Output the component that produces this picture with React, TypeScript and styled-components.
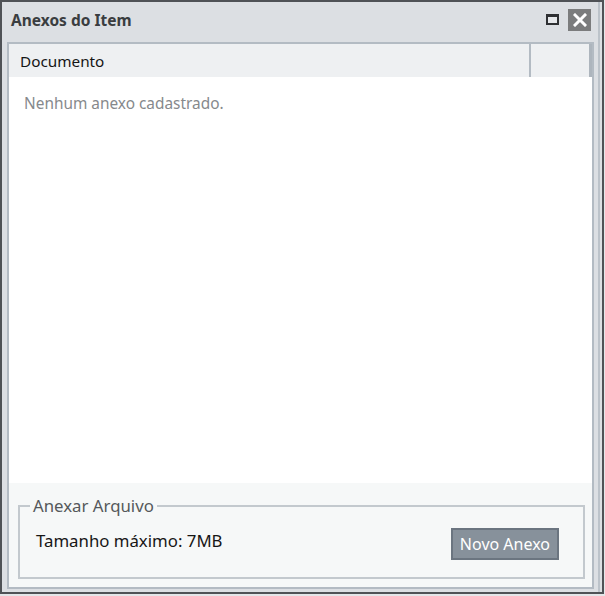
import styled, { createGlobalStyle } from 'styled-components';

const GlobalStyle = createGlobalStyle`
  html, body {
    margin: 0;
    padding: 0;
    background: #e4e6e9;
  }
  body {
    font-family: "Noto Sans", "Open Sans", Arial, sans-serif;
  }
`;

export default function App() {
  return (
    <>
      <GlobalStyle />
      <Window>
        <TitleBar>
          <Title>Anexos do Item</Title>
          <TitleActions>
            <MaximizeButton aria-label="Maximizar" />
            <CloseButton aria-label="Fechar">
              <svg width="14" height="14" viewBox="0 0 14 14">
                <path d="M2 2 L12 12 M12 2 L2 12" stroke="#fff" strokeWidth="3" strokeLinecap="square" />
              </svg>
            </CloseButton>
          </TitleActions>
        </TitleBar>

        <Frame>
          <GridHeader>
            <HeaderCell>Documento</HeaderCell>
            <HeaderCell narrow />
          </GridHeader>
          <GridBody>
            <EmptyText>Nenhum anexo cadastrado.</EmptyText>
          </GridBody>

          <UploadPanel>
            <UploadBox>
              <UploadLegend>Anexar Arquivo</UploadLegend>
              <UploadRow>
                <SizeLabel>Tamanho máximo: 7MB</SizeLabel>
                <ActionButton>Novo Anexo</ActionButton>
              </UploadRow>
            </UploadBox>
          </UploadPanel>
        </Frame>
      </Window>
    </>
  );
}

const Window = styled.div`
  box-sizing: border-box;
  width: 604px;
  height: 594px;
  display: flex;
  flex-direction: column;
  background: #dcdfe3;
  border: 2px solid #4f5256;
  padding: 0 8px 3px 5px;
  box-shadow: inset -2px 0 0 #dcdfe3, inset -4px 0 0 #bcc3ca;
`;

const TitleBar = styled.div`
  height: 40px;
  display: flex;
  align-items: center;
  justify-content: space-between;
  padding-left: 4px;
`;

const Title = styled.span`
  font-size: 15.5px;
  font-weight: 700;
  color: #3a3d40;
  margin-top: -4px;
`;

const TitleActions = styled.div`
  display: flex;
  align-items: center;
  gap: 9px;
  margin-right: 3px;
  margin-top: -5px;
`;

const MaximizeButton = styled.span`
  box-sizing: border-box;
  width: 13px;
  height: 11px;
  border: 2px solid #2e3033;
  border-top-width: 3px;
  background: #e6e8eb;
`;

const CloseButton = styled.span`
  width: 23px;
  height: 22px;
  display: flex;
  align-items: center;
  justify-content: center;
  background: #7b7c7d;
`;

const Frame = styled.div`
  flex: 1;
  display: flex;
  flex-direction: column;
  border: 2px solid #b3bbc3;
  background: #fff;
`;

const GridHeader = styled.div`
  height: 33px;
  display: flex;
  background: #eef0f2;
  border-right: 3px solid #adb5bd;
`;

const HeaderCell = styled.div<{ narrow?: boolean }>`
  box-sizing: border-box;
  display: flex;
  align-items: center;
  padding-left: 11px;
  font-size: 15.3px;
  color: #151515;
  ${props => props.narrow
    ? 'width: 60px; border-left: 2px solid #b3bbc3;'
    : 'flex: 1;'}
`;

const GridBody = styled.div`
  flex: 1;
  background: #fff;
  padding: 16px 0 0 15px;
`;

const EmptyText = styled.p`
  margin: 0;
  font-size: 15.4px;
  color: #86898c;
`;

const UploadPanel = styled.div`
  height: 104px;
  box-sizing: border-box;
  background: #f6f8f8;
  padding: 11px 7px 8px 9px;
`;

const UploadBox = styled.fieldset`
  margin: 0;
  padding: 0;
  border: 2px solid #c3c9ce;
  min-width: 0;
`;

const UploadLegend = styled.legend`
  margin-left: 10px;
  padding: 0 3px;
  font-size: 16.8px;
  color: #55585b;
`;

const UploadRow = styled.div`
  display: flex;
  align-items: center;
  justify-content: space-between;
  padding: 11px 24px 17px 16px;
`;

const SizeLabel = styled.span`
  font-size: 16.8px;
  color: #161616;
  margin-top: -7px;
`;

const ActionButton = styled.button`
  box-sizing: border-box;
  height: 32px;
  padding: 0 7px;
  background: #87919b;
  border: 2px solid #6b7580;
  color: #fff;
  font-family: "Noto Sans", "Open Sans", Arial, sans-serif;
  font-size: 16px;
  cursor: pointer;
`;
